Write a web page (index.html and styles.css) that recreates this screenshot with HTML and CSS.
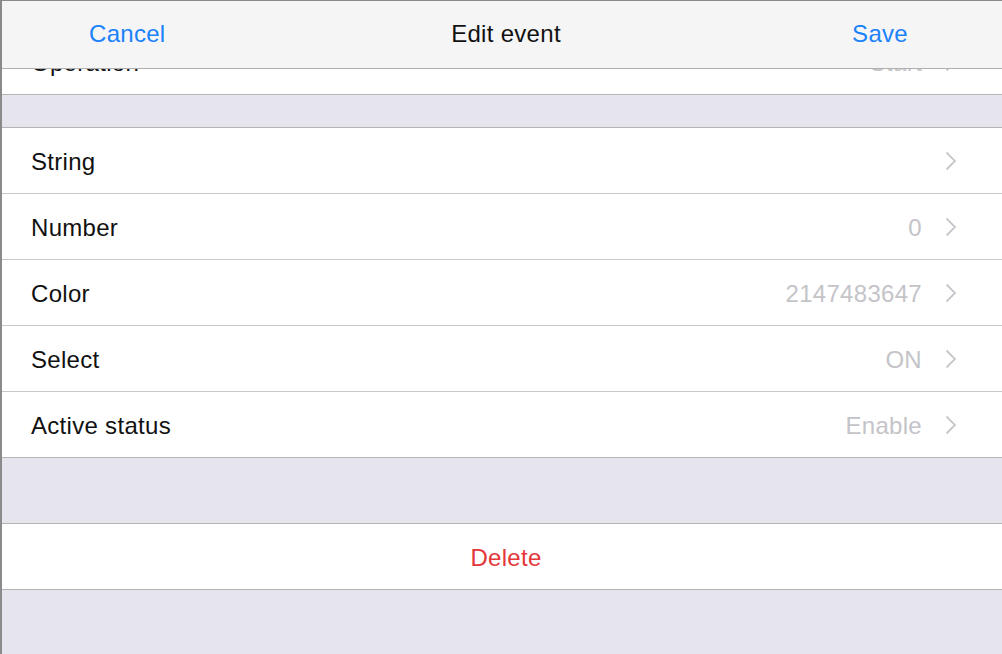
FILE: index.html
```html
<!DOCTYPE html>
<html>
<head>
<meta charset="utf-8">
<link rel="stylesheet" href="styles.css">
</head>
<body>
<div class="screen">
  <header class="navbar">
    <span class="nav-btn nav-left">Cancel</span>
    <span class="nav-title">Edit event</span>
    <span class="nav-btn nav-right">Save</span>
  </header>
  <main class="content">
    <section class="group group-first">
      <div class="row">
        <span class="label">Operation</span>
        <span class="value">Start</span>
        <svg class="chev" width="12" height="20" viewBox="0 0 12 20"><polyline points="1.5,1.5 10,10 1.5,18.5" fill="none" stroke="#c7c7cc" stroke-width="1.8"/></svg>
      </div>
    </section>
    <div class="gap"></div>
    <section class="group">
      <div class="row">
        <span class="label">String</span>
        <span class="value"></span>
        <svg class="chev" width="12" height="20" viewBox="0 0 12 20"><polyline points="1.5,1.5 10,10 1.5,18.5" fill="none" stroke="#c7c7cc" stroke-width="1.8"/></svg>
      </div>
      <div class="row">
        <span class="label">Number</span>
        <span class="value">0</span>
        <svg class="chev" width="12" height="20" viewBox="0 0 12 20"><polyline points="1.5,1.5 10,10 1.5,18.5" fill="none" stroke="#c7c7cc" stroke-width="1.8"/></svg>
      </div>
      <div class="row">
        <span class="label">Color</span>
        <span class="value">2147483647</span>
        <svg class="chev" width="12" height="20" viewBox="0 0 12 20"><polyline points="1.5,1.5 10,10 1.5,18.5" fill="none" stroke="#c7c7cc" stroke-width="1.8"/></svg>
      </div>
      <div class="row">
        <span class="label">Select</span>
        <span class="value">ON</span>
        <svg class="chev" width="12" height="20" viewBox="0 0 12 20"><polyline points="1.5,1.5 10,10 1.5,18.5" fill="none" stroke="#c7c7cc" stroke-width="1.8"/></svg>
      </div>
      <div class="row">
        <span class="label">Active status</span>
        <span class="value">Enable</span>
        <svg class="chev" width="12" height="20" viewBox="0 0 12 20"><polyline points="1.5,1.5 10,10 1.5,18.5" fill="none" stroke="#c7c7cc" stroke-width="1.8"/></svg>
      </div>
    </section>
    <div class="gap gap-tall"></div>
    <section class="group">
      <div class="row row-center">
        <span class="delete">Delete</span>
      </div>
    </section>
  </main>
</div>
</body>
</html>
```
FILE: styles.css
```css
* { box-sizing: border-box; }
html, body {
  margin: 0;
  padding: 0;
  width: 1002px;
  height: 654px;
  overflow: hidden;
  background: #e6e5ee;
}
body {
  font-family: "Liberation Sans", Arial, Helvetica, sans-serif;
  letter-spacing: 0.3px;
}
.screen {
  position: relative;
  width: 1002px;
  height: 654px;
  border-top: 1px solid #8a8a8a;
  border-left: 2px solid #8a8a8a;
  overflow: hidden;
  background: #e6e5ee;
}
.navbar {
  position: absolute;
  top: 0;
  left: 0;
  right: 0;
  height: 68px;
  background: #f5f5f5;
  border-bottom: 1px solid #b0b0b0;
  display: flex;
  align-items: center;
  z-index: 2;
  font-size: 24px;
}
.nav-btn { color: #1a82fb; }
.nav-left { position: absolute; left: 87px; top: 19px; }
.nav-right { position: absolute; right: 94px; top: 19px; }
.nav-title {
  flex: 1;
  text-align: center;
  color: #111;
  padding-left: 8px;
  margin-top: -1px;
}
.content {
  padding-top: 27px;
  display: flex;
  flex-direction: column;
}
.group {
  background: #fff;
  border-top: 1px solid #b4b4b4;
  border-bottom: 1px solid #b4b4b4;
}
.gap { height: 32px; }
.gap-tall { height: 65px; }
.row {
  height: 66px;
  display: flex;
  align-items: center;
  padding-top: 2px;
  padding-left: 29px;
  padding-right: 45px;
  border-bottom: 1px solid #c8c7cc;
  font-size: 24px;
}
.group .row:last-child { border-bottom: none; height: 65px; }
.label { color: #111; flex: 1; }
.value { color: #c4c4c8; margin-right: 23px; }
.chev { display: block; margin-top: -2px; }
.row-center { justify-content: center; padding-left: 37px; padding-right: 29px; }
.delete { color: #e4373a; }
```
